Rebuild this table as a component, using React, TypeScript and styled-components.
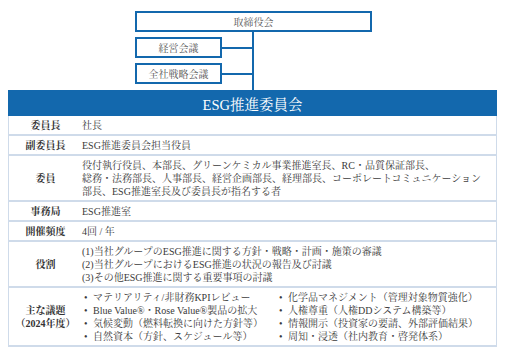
import styled, { createGlobalStyle } from "styled-components";

const GlobalStyle = createGlobalStyle`
  body {
    margin: 0;
    background: #ffffff;
    font-family: "Liberation Serif", "Noto Serif CJK JP", "Noto Sans CJK JP", serif;
    color: #3a3a3a;
  }
`;

const BLUE = "#1368ad";
const LINE = "#cfdbea";

const Page = styled.div`
  width: 506px;
  height: 349px;
  overflow: hidden;
`;

const OrgChart = styled.div`
  display: flex;
  flex-direction: column;
  padding: 11px 0 0 135px;
`;

const Box = styled.div<{ $width: number }>`
  box-sizing: border-box;
  width: ${(p) => p.$width}px;
  height: 21px;
  border: 2px solid ${BLUE};
  display: flex;
  align-items: center;
  justify-content: center;
  font-size: 10px;
  color: #555;
  background: #fff;
`;

const Branches = styled.div`
  box-sizing: border-box;
  width: 119px;
  border-right: 2px solid ${BLUE};
  padding: 5px 0 6px;
  display: flex;
  flex-direction: column;
  gap: 5px;
`;

const BranchRow = styled.div`
  display: flex;
  align-items: center;
`;

const Connector = styled.div`
  flex: 1;
  height: 2px;
  background: ${BLUE};
`;

const Table = styled.div`
  margin: 0 9px 0 8px;
  border-left: 1px solid ${LINE};
  border-right: 1px solid ${LINE};
`;

const Header = styled.div`
  height: 26px;
  background: ${BLUE};
  color: #fff;
  font-size: 14.5px;
  display: flex;
  align-items: center;
  justify-content: center;
  margin: 0 -1px;
`;

const Row = styled.div`
  display: grid;
  grid-template-columns: 73px 1fr;
  border-bottom: 2px solid ${LINE};
  padding: 3px 0 2px;
  font-size: 10px;
  line-height: 13px;
`;

const Label = styled.div`
  display: flex;
  flex-direction: column;
  align-items: center;
  justify-content: center;
  font-weight: bold;
  color: #333;
  text-align: center;
`;

const Value = styled.div`
  display: flex;
  flex-direction: column;
  justify-content: center;
`;

const Line = styled.span`
  white-space: nowrap;
`;

const Topics = styled.div`
  display: grid;
  grid-template-columns: 195px 1fr;
`;

const TopicList = styled.ul`
  margin: 0;
  padding: 0;
  list-style: none;
`;

const Topic = styled.li`
  white-space: nowrap;
  padding-left: 11px;
  position: relative;

  &::before {
    content: "•";
    position: absolute;
    left: 2px;
  }
`;

const rows: { label: string[]; lines: string[] }[] = [
  { label: ["委員長"], lines: ["社長"] },
  { label: ["副委員長"], lines: ["ESG推進委員会担当役員"] },
  {
    label: ["委員"],
    lines: [
      "役付執行役員、本部長、グリーンケミカル事業推進室長、RC・品質保証部長、",
      "総務・法務部長、人事部長、経営企画部長、経理部長、コーポレートコミュニケーション",
      "部長、ESG推進室長及び委員長が指名する者",
    ],
  },
  { label: ["事務局"], lines: ["ESG推進室"] },
  { label: ["開催頻度"], lines: ["4回 / 年"] },
  {
    label: ["役割"],
    lines: [
      "(1)当社グループのESG推進に関する方針・戦略・計画・施策の審議",
      "(2)当社グループにおけるESG推進の状況の報告及び討議",
      "(3)その他ESG推進に関する重要事項の討議",
    ],
  },
];

const leftTopics = [
  "マテリアリティ/非財務KPIレビュー",
  "Blue Value®・Rose Value®製品の拡大",
  "気候変動（燃料転換に向けた方針等）",
  "自然資本（方針、スケジュール等）",
];

const rightTopics = [
  "化学品マネジメント（管理対象物質強化）",
  "人権尊重（人権DDシステム構築等）",
  "情報開示（投資家の要請、外部評価結果）",
  "周知・浸透（社内教育・啓発体系）",
];

const App = () => {
  return (
    <Page>
      <GlobalStyle />
      <OrgChart>
        <Box $width={237}>取締役会</Box>
        <Branches>
          <BranchRow>
            <Box $width={87}>経営会議</Box>
            <Connector />
          </BranchRow>
          <BranchRow>
            <Box $width={87}>全社戦略会議</Box>
            <Connector />
          </BranchRow>
        </Branches>
      </OrgChart>
      <Table>
        <Header>ESG推進委員会</Header>
        {rows.map((row) => (
          <Row key={row.label.join("")}>
            <Label>
              {row.label.map((l) => (
                <span key={l}>{l}</span>
              ))}
            </Label>
            <Value>
              {row.lines.map((l) => (
                <Line key={l}>{l}</Line>
              ))}
            </Value>
          </Row>
        ))}
        <Row>
          <Label>
            <span>主な議題</span>
            <span>（2024年度）</span>
          </Label>
          <Topics>
            <TopicList>
              {leftTopics.map((t) => (
                <Topic key={t}>{t}</Topic>
              ))}
            </TopicList>
            <TopicList>
              {rightTopics.map((t) => (
                <Topic key={t}>{t}</Topic>
              ))}
            </TopicList>
          </Topics>
        </Row>
      </Table>
    </Page>
  );
};

export default App;
